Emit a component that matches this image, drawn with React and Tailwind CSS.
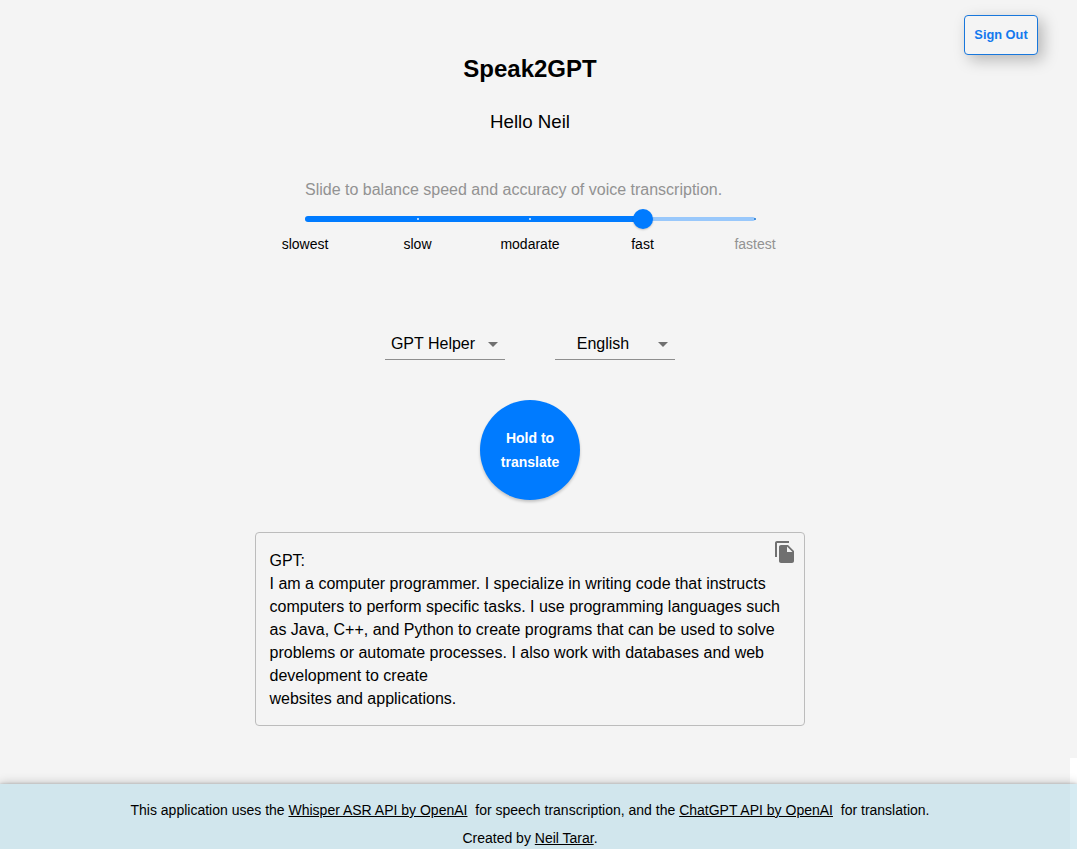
const speeds = ["slowest", "slow", "modarate", "fast", "fastest"];

function Select({ label }) {
  return (
    <div className="flex h-8 w-[120px] items-center border-b border-[#8e8e8e]">
      <span className="w-24 text-center text-base leading-[23px]">{label}</span>
      <svg className="size-6 text-[#707070]" viewBox="0 0 24 24" fill="currentColor">
        <path d="M7 10l5 5 5-5z" />
      </svg>
    </div>
  );
}

function SpeedSlider() {
  return (
    <div className="flex flex-col items-center">
      <p className="w-[450px] text-base leading-6 text-[#929292]">
        Slide to balance speed and accuracy of voice transcription.
      </p>
      <div className="relative mt-[7px] flex h-5 w-[450px] items-center">
        <div className="h-1 w-full rounded-full bg-[#99c8fb]" />
        <div className="absolute top-[7px] left-0 h-1.5 w-[338px] rounded-full bg-[#007bff]" />
        <div className="absolute top-[9px] left-[112px] size-0.5 rounded-[1px] bg-[#e2f0ff]" />
        <div className="absolute top-[9px] left-[224px] size-0.5 rounded-[1px] bg-[#e2f0ff]" />
        <div className="absolute top-[9px] left-[449px] size-0.5 rounded-[1px] bg-[#1976d2]" />
        <div className="absolute top-0 left-[328px] size-5 rounded-full bg-[#007bff] shadow-[0_1px_2px_rgba(0,0,0,0.2)]" />
      </div>
      <div className="mt-[5px] grid w-[562.5px] grid-cols-5 text-center text-sm leading-5">
        {speeds.map((s) => (
          <span key={s} className={s === "fastest" ? "text-[#929292]" : ""}>
            {s}
          </span>
        ))}
      </div>
    </div>
  );
}

export default function App() {
  return (
    <div className="relative flex h-[849px] w-full flex-col overflow-hidden bg-[#f4f4f4] font-['Liberation_Sans',Arial,sans-serif] text-black">
      <button className="absolute top-[15px] left-[964px] h-10 w-[74px] rounded-[4px] border border-[#1877dc] bg-[#f4f4f4] text-[12.8px] font-bold text-[#1379ee] shadow-[5px_5px_15px_rgba(0,0,0,0.25)]">
        Sign Out
      </button>
      <div className="absolute top-[758px] right-0 h-[91px] w-[7px] bg-white" />

      <main className="flex h-[784px] w-[1060px] shrink-0 flex-col items-center pt-[53px]">
        <h1 className="text-2xl leading-8 font-bold">Speak2GPT</h1>
        <h2 className="mt-[25px] text-[18.72px] leading-6">Hello Neil</h2>
        <div className="mt-[44px]">
          <SpeedSlider />
        </div>
        <div className="mt-[74px] flex gap-[50px]">
          <Select label="GPT Helper" />
          <Select label="English" />
        </div>
        <button className="mt-10 size-[100px] rounded-full bg-[#007bff] text-sm leading-6 font-bold text-white shadow-[0_2px_3px_rgba(0,0,0,0.2)]">
          Hold to
          <br />
          translate
        </button>
        <section className="relative mt-8 h-[194px] w-[550px] rounded-[4px] border border-[#bcbcbc] px-[13.5px] pt-[15.5px]">
          <p className="text-base leading-[23px]">
            GPT:
            <br />
            I am a computer programmer. I specialize in writing code that instructs computers to perform specific tasks. I use programming languages such as Java, C++, and Python to create programs that can be used to solve problems or automate processes. I also work with databases and web development to create
            <br />
            websites and applications.
          </p>
          <svg className="absolute top-[7px] right-[7px] size-6 text-[#707070]" viewBox="0 0 24 24" fill="currentColor">
            <path d="M16 1H4c-1.1 0-2 .9-2 2v14h2V3h12V1zm-1 4 6 6v10c0 1.100-.9 2-2 2H7.990C6.890 23 6 22.100 6 21l.010-14c0-1.100.890-2 1.990-2h7zm-1 7h5.500L14 6.500V12z" />
          </svg>
        </section>
      </main>

      <footer className="relative h-[65px] w-full shrink-0 bg-[#add8e6]/50 shadow-[0_0_10px_rgba(0,0,0,0.25),0_0_3px_rgba(0,0,0,0.2)]">
        <div className="w-[1060px] pt-3 text-center text-sm leading-7">
          <p>
            This application uses the <a className="underline">Whisper ASR API by OpenAI</a>&nbsp; for speech transcription, and the <a className="underline">ChatGPT API by OpenAI</a>&nbsp; for translation.
          </p>
          <p>
            Created by <a className="underline">Neil Tarar</a>.
          </p>
        </div>
      </footer>
    </div>
  );
}
